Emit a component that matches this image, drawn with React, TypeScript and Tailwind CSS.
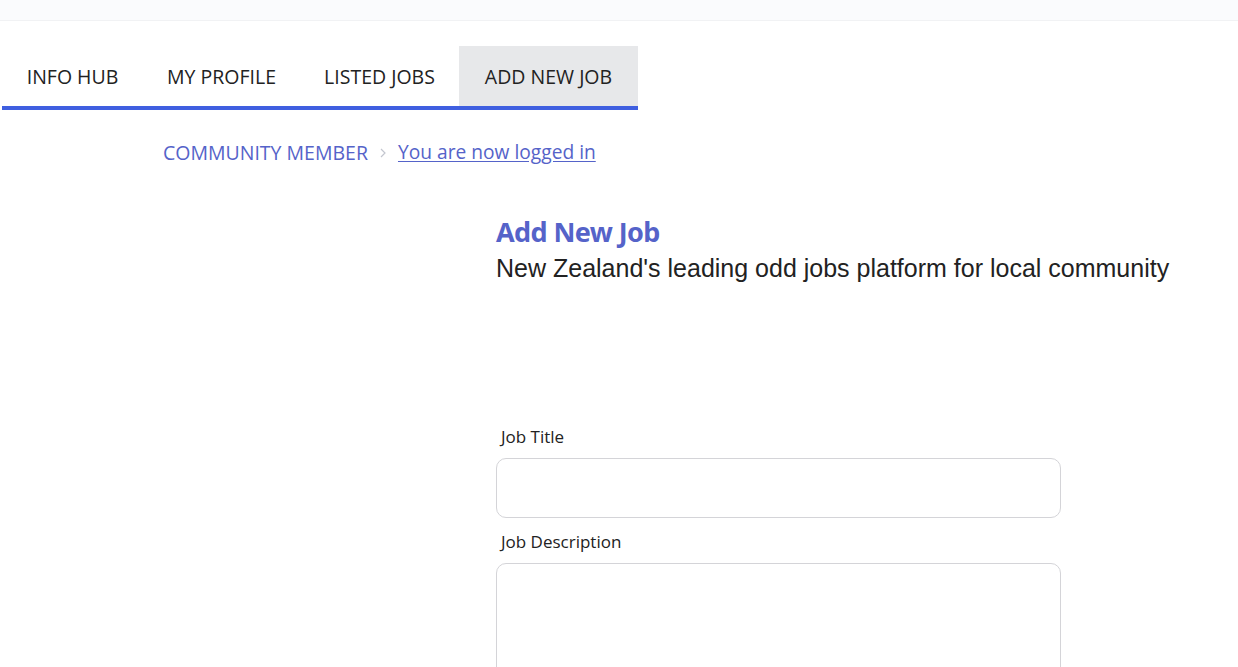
const tabs = [
  { label: "INFO HUB", w: "w-[141px]" },
  { label: "MY PROFILE", w: "w-[157px]" },
  { label: "LISTED JOBS", w: "w-[159px]" },
  { label: "ADD NEW JOB", w: "w-[179px]", active: true },
];

export default function App() {
  return (
    <div className="min-h-screen bg-white" style={{ fontFamily: '"Open Sans", "Noto Sans", sans-serif' }}>
      {/* top strip */}
      <div className="h-[21px] bg-[#fafbfd] border-b border-[#f1f2f4]" />

      {/* tabs */}
      <nav className="mt-[25px] ml-[2px] flex w-[636px] border-b-4 border-[#3f5fe0]">
        {tabs.map((t) => (
          <div
            key={t.label}
            className={`${t.w} h-[60px] flex items-center justify-center pt-[2px] text-[19.5px] text-[#222] ${
              t.active ? "bg-[#e7e8ea]" : ""
            }`}
          >
            {t.label}
          </div>
        ))}
      </nav>

      {/* breadcrumb */}
      <div className="mt-[28px] ml-[163px] flex items-center gap-[10px] text-[19.5px] text-[#5563c9]">
        <span>COMMUNITY MEMBER</span>
        <svg width="10" height="12" viewBox="0 0 10 12" fill="none" stroke="#c3c6cf" strokeWidth="1.2">
          <path d="M3 2l4 4-4 4" />
        </svg>
        <a href="#" className="text-[19.2px] underline underline-offset-2">You are now logged in</a>
      </div>

      {/* main */}
      <div className="ml-[496px] mt-[48px] w-[700px]">
        <h1
          className="text-[27px] font-bold leading-[34px] tracking-[-0.6px] text-[#5563c9]"
          style={{ fontFamily: '"Noto Sans", sans-serif' }}
        >
          Add New Job
        </h1>
        <p className="mt-[4px] text-[25px] leading-[30px] text-[#222]" style={{ fontFamily: '"Liberation Sans", Arial, sans-serif' }}>
          New Zealand's leading odd jobs platform for local community
        </p>

        <form className="mt-[143px] w-[565px] flex flex-col">
          <label className="ml-[5px] text-[17px] leading-[22px] text-[#222]">Job Title</label>
          <input className="mt-[10px] h-[60px] rounded-[10px] border border-[#d4d4d8] px-3" />
          <label className="mt-[13px] ml-[5px] text-[17px] leading-[22px] text-[#222]">Job Description</label>
          <textarea className="mt-[10px] h-[160px] rounded-[10px] border border-[#d4d4d8] px-3 resize-none" />
        </form>
      </div>
    </div>
  );
}
